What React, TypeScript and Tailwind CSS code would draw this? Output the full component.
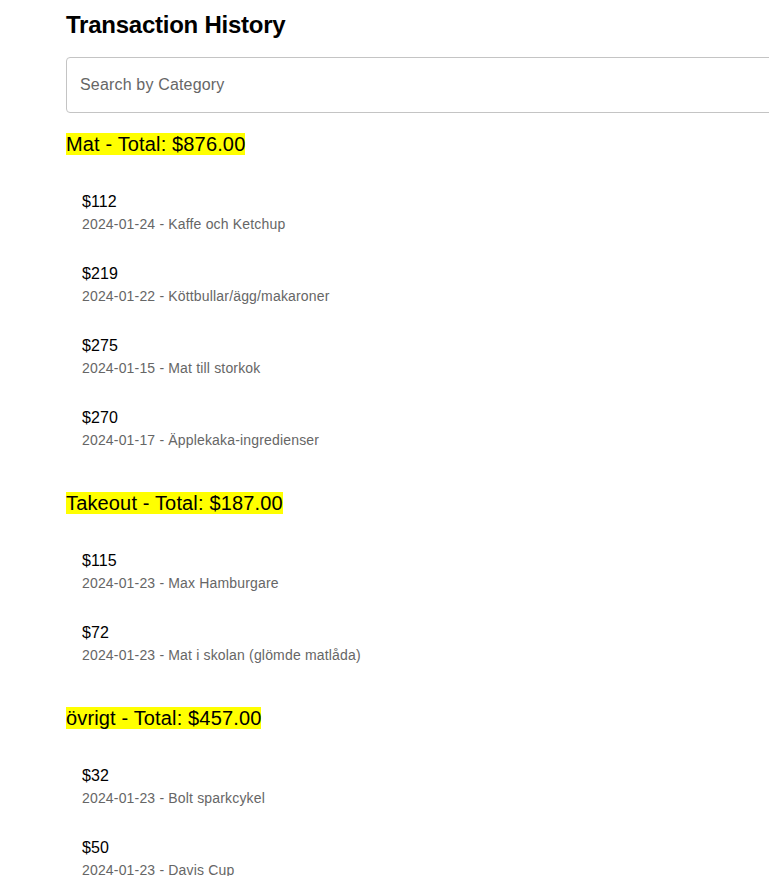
import React from "react";

type Tx = { amount: number; date: string; desc: string };
type Group = { name: string; total: string; items: Tx[] };

const groups: Group[] = [
  {
    name: "Mat",
    total: "876.00",
    items: [
      { amount: 112, date: "2024-01-24", desc: "Kaffe och Ketchup" },
      { amount: 219, date: "2024-01-22", desc: "Köttbullar/ägg/makaroner" },
      { amount: 275, date: "2024-01-15", desc: "Mat till storkok" },
      { amount: 270, date: "2024-01-17", desc: "Äpplekaka-ingredienser" },
    ],
  },
  {
    name: "Takeout",
    total: "187.00",
    items: [
      { amount: 115, date: "2024-01-23", desc: "Max Hamburgare" },
      { amount: 72, date: "2024-01-23", desc: "Mat i skolan (glömde matlåda)" },
    ],
  },
  {
    name: "övrigt",
    total: "457.00",
    items: [
      { amount: 32, date: "2024-01-23", desc: "Bolt sparkcykel" },
      { amount: 50, date: "2024-01-23", desc: "Davis Cup" },
    ],
  },
];

export default function App() {
  return (
    <div
      className="h-screen w-full overflow-hidden bg-white text-black"
      style={{ fontFamily: '"Liberation Sans", Arial, Helvetica, sans-serif' }}
    >
      <div className="pl-[66px] pt-[9px]">
        <h1 className="text-[24px] font-bold leading-8 tracking-[-0.25px]">Transaction History</h1>
        <input
          type="text"
          placeholder="Search by Category"
          className="mt-4 block h-[56px] w-[800px] rounded-[4px] border border-[#c4c4c4] px-[13px] text-[16px] tracking-[0.17px] outline-none placeholder:text-[#666666]"
        />
        {groups.map((g, gi) => (
          <div key={g.name} className={gi === 0 ? "mt-[15px]" : "mt-[23px]"}>
            <h2 className="text-[20px] leading-8 font-normal tracking-[0.15px]">
              <span className="bg-[#ffff00]">
                {g.name} - Total: ${g.total}
              </span>
            </h2>
            <ul className="mt-4">
              {g.items.map((t, i) => (
                <li key={i} className="pl-4 pt-[14px] pb-[14px]">
                  <div className="text-[16px] leading-6 tracking-[0.1px]">${t.amount}</div>
                  <div className="text-[14px] leading-5 tracking-[0.17px] text-[#666666]">
                    {t.date} - {t.desc}
                  </div>
                </li>
              ))}
            </ul>
          </div>
        ))}
      </div>
    </div>
  );
}
